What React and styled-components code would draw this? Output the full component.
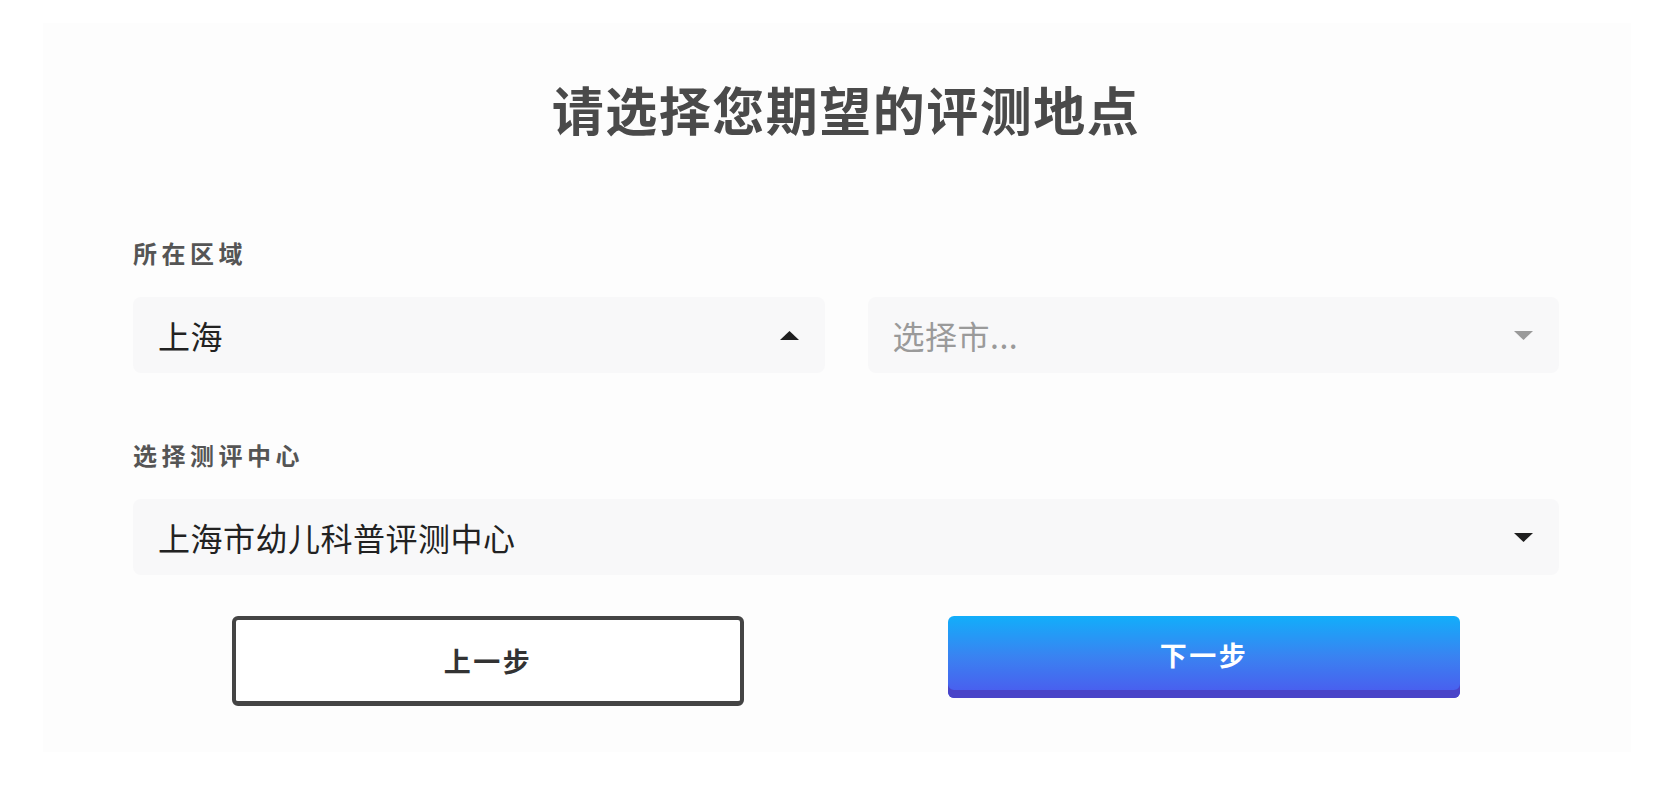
import React from "react";
import styled, { createGlobalStyle } from "styled-components";

const GlobalStyle = createGlobalStyle`
  html, body {
    margin: 0;
    padding: 0;
    background: #ffffff;
    font-family: "Noto Sans CJK SC", "Noto Sans", sans-serif;
  }
`;

const Page = styled.div`
  padding-top: 23px;
  padding-left: 43px;
  height: 800px;
  box-sizing: border-box;
`;

const Panel = styled.div`
  width: 1588px;
  height: 729px;
  box-sizing: border-box;
  background: #fdfdfd;
  padding: 60px 72px 0 90px;
  display: flex;
  flex-direction: column;
`;

const Title = styled.h1`
  margin: 0;
  font-size: 52px;
  line-height: 52px;
  font-weight: 700;
  letter-spacing: 1.5px;
  color: #4a4a4a;
  text-align: center;
`;

const Label = styled.div`
  margin-top: ${(p) => p.top}px;
  font-size: 24px;
  line-height: 24px;
  font-weight: 700;
  letter-spacing: 4.5px;
  color: #555555;
`;

const Row = styled.div`
  margin-top: 32px;
  display: grid;
  grid-template-columns: ${(p) => (p.split ? "1fr 1fr" : "1fr")};
  column-gap: 43px;
`;

const Select = styled.div`
  height: 76px;
  box-sizing: border-box;
  background: #f8f8f9;
  border-radius: 8px;
  padding: 0 26px 0 25px;
  display: flex;
  align-items: center;
  justify-content: space-between;
`;

const Value = styled.span`
  font-size: 32px;
  letter-spacing: 0.5px;
  color: ${(p) => (p.placeholder ? "#9a9a9a" : "#222222")};
`;

const Buttons = styled.div`
  margin-top: 41px;
  display: flex;
  align-items: flex-start;
  justify-content: center;
  gap: 204px;
`;

const Button = styled.button`
  width: 512px;
  box-sizing: border-box;
  border-radius: 6px;
  font-family: inherit;
  font-size: 27px;
  font-weight: 700;
  letter-spacing: 2.5px;
  cursor: pointer;
  display: flex;
  align-items: center;
  justify-content: center;
`;

const BackButton = styled(Button)`
  height: 90px;
  background: #ffffff;
  color: #333333;
  border: 4px solid #444444;
  border-bottom-width: 5px;
`;

const NextButton = styled(Button)`
  height: 82px;
  border: none;
  color: #ffffff;
  padding-bottom: 6px;
  background: linear-gradient(180deg, #12aefa 0%, #3a82f1 50%, #4c58ee 100%);
  box-shadow: inset 0 -8px 0 #4944c8;
`;

function Caret({ up, color }) {
  return (
    <svg width="19" height="9" viewBox="0 0 19 9">
      <path d={up ? "M0 9 L9.5 0 L19 9 Z" : "M0 0 L19 0 L9.5 9 Z"} fill={color} />
    </svg>
  );
}

export default function App() {
  return (
    <>
      <GlobalStyle />
      <Page>
        <Panel>
          <Title>请选择您期望的评测地点</Title>

          <Label top={106}>所在区域</Label>
          <Row split>
            <Select>
              <Value>上海</Value>
              <Caret up color="#1f1f1f" />
            </Select>
            <Select>
              <Value placeholder>选择市...</Value>
              <Caret color="#9a9a9a" />
            </Select>
          </Row>

          <Label top={70}>选择测评中心</Label>
          <Row>
            <Select>
              <Value>上海市幼儿科普评测中心</Value>
              <Caret color="#1f1f1f" />
            </Select>
          </Row>

          <Buttons>
            <BackButton>上一步</BackButton>
            <NextButton>下一步</NextButton>
          </Buttons>
        </Panel>
      </Page>
    </>
  );
}
